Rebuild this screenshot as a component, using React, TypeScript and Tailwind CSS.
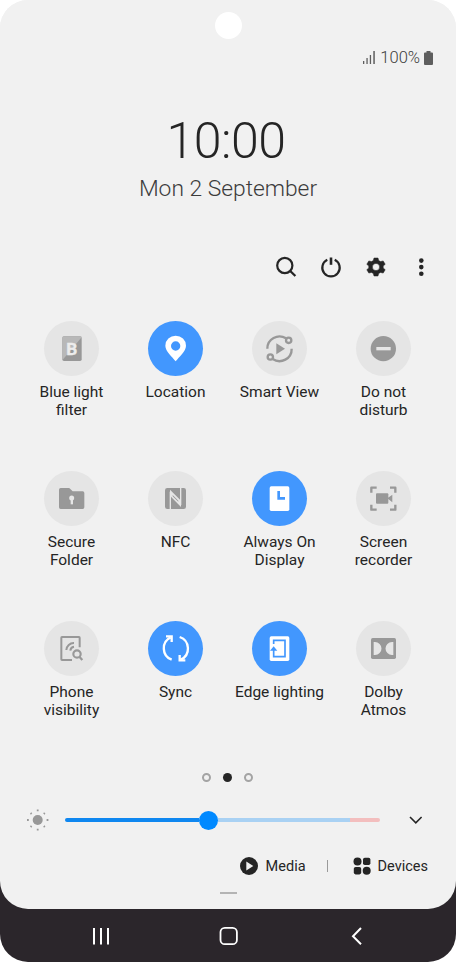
import type { ReactNode } from "react";

type Tile = { label: string[]; on?: boolean; icon: ReactNode };

// Tile icons share a 165-unit box, three units to a pixel.
const tiles: Tile[] = [
  {
    label: ["Blue light", "filter"],
    icon: (
      <>
        <rect x="55" y="46" width="58" height="74" rx="5" fill="#989898" />
        <path d="M60 46H108Q113 46 113 49L55 118V51Q55 46 60 46Z" fill="#b8b8b8" />
        <text x="83" y="101" textAnchor="middle" fontSize="52" fontWeight="700" fill="#ececec" stroke="#ececec" strokeWidth="1">
          B
        </text>
      </>
    ),
  },
  {
    label: ["Location"],
    on: true,
    icon: (
      <path
        fillRule="evenodd"
        fill="#fff"
        d="M83 121C73 107 52 91 52 74A31 30 0 0 1 114 74C114 91 93 107 83 121ZM83 61A14 14 0 1 0 83 89A14 14 0 1 0 83 61Z"
      />
    ),
  },
  {
    label: ["Smart View"],
    icon: (
      <>
        <g fill="none" stroke="#989898" strokeWidth="7">
          <path d="M46 83A36.500 36.500 0 0 1 102 52" />
          <path d="M119 83A36.500 36.500 0 0 1 62 114" />
          <circle cx="110" cy="58" r="8" />
          <circle cx="55" cy="108" r="8" />
        </g>
        <path d="M73 67V100L99 83Z" fill="#989898" />
      </>
    ),
  },
  {
    label: ["Do not", "disturb"],
    icon: (
      <>
        <circle cx="82" cy="83" r="38" fill="#989898" />
        <rect x="61" y="78" width="43" height="10" fill="#e6e6e6" />
      </>
    ),
  },
  {
    label: ["Secure", "Folder"],
    icon: (
      <>
        <path d="M50 51H74Q77 51 79 54L86 61H116Q121 61 121 66V109Q121 114 116 114H50Q45 114 45 109V56Q45 51 50 51Z" fill="#989898" />
        <circle cx="83" cy="81" r="7.500" fill="#e6e6e6" />
        <rect x="80" y="83" width="7" height="17" fill="#e6e6e6" />
      </>
    ),
  },
  {
    label: ["NFC"],
    icon: (
      <>
        <rect x="51" y="51" width="63" height="63" rx="7" fill="#989898" />
        <path d="M67 115V62M98 50V102" fill="none" stroke="#e6e6e6" strokeWidth="4" />
        <path d="M66 56L99 89V108L66 74Z" fill="#e6e6e6" />
        <path d="M74 72L91 89V92L74 76Z" fill="#989898" />
      </>
    ),
  },
  {
    label: ["Always On", "Display"],
    on: true,
    icon: (
      <>
        <rect x="53" y="46" width="59" height="74" rx="5" fill="#fff" />
        <path d="M80 60V82H99" fill="none" stroke="#4297fe" strokeWidth="8" />
      </>
    ),
  },
  {
    label: ["Screen", "recorder"],
    icon: (
      <>
        <path
          d="M46 65V50H62M102 50H118V65M118 101V116H102M62 116H46V101"
          fill="none"
          stroke="#989898"
          strokeWidth="7"
          strokeLinejoin="round"
        />
        <rect x="60" y="67" width="37" height="31" rx="3" fill="#989898" />
        <path d="M94 82L109 71V94Z" fill="#989898" />
      </>
    ),
  },
  {
    label: ["Phone", "visibility"],
    icon: (
      <g fill="none" stroke="#989898" strokeWidth="6.500">
        <path d="M107 79V50Q107 48 105 48H54Q52 48 52 50V115Q52 117 54 117H84" strokeWidth="6" />
        <path d="M67 87A22 22 0 0 1 90 66M79 89A13 13 0 0 1 90 77" strokeWidth="6" />
        <circle cx="99" cy="99" r="11" />
        <path d="M106 107L115 117" />
      </g>
    ),
  },
  {
    label: ["Sync"],
    on: true,
    icon: (
      <g fill="none" stroke="#fff" strokeWidth="7">
        <path d="M71 116A36.500 36.500 0 0 1 68 49M95 48A36.500 36.500 0 0 1 98 116" />
        <path d="M54 46H71V63M95 102V118H112" />
      </g>
    ),
  },
  {
    label: ["Edge lighting"],
    on: true,
    icon: (
      <>
        <rect x="53" y="46" width="59" height="74" rx="5" fill="#fff" />
        <path d="M65 69V58H99V107H65V84" fill="none" stroke="#4297fe" strokeWidth="5" />
        <path d="M65 76L54 89H76Z" fill="#4297fe" />
      </>
    ),
  },
  {
    label: ["Dolby", "Atmos"],
    icon: (
      <>
        <rect x="45" y="51" width="75" height="63" rx="5" fill="#989898" />
        <path d="M53 63H57A19.500 19.500 0 0 1 57 102H53ZM112 63H108A19.500 19.500 0 0 0 108 102H112Z" fill="#e6e6e6" />
      </>
    ),
  },
];

function QuickTile({ label, on, icon }: Tile) {
  return (
    <div className="flex h-[150px] flex-col items-center">
      <div className={on ? "size-[55px] rounded-full bg-[#4297fe]" : "size-[55px] rounded-full bg-[#e5e5e5]"}>
        <svg viewBox="0 0 165 165" className="size-full">
          {icon}
        </svg>
      </div>
      <div className="mt-[7px] text-center text-[15.500px] leading-[18px] whitespace-nowrap">
        {label.map((line) => (
          <div key={line}>{line}</div>
        ))}
      </div>
    </div>
  );
}

function StatusBar() {
  return (
    <div className="mt-[10px] flex h-[18px] items-center justify-end pr-[23px] text-[16.500px] text-[#5e5e5e]">
      <svg viewBox="0 0 12 13" className="mr-[5px] mb-[1px] h-[13px] w-3" fill="#5e5e5e">
        <path d="M0 10h1.300v3H0zM3.400 7h1.300v6H3.400zM6.800 4h1.300v9H6.800zM10.300 0h1.500v13h-1.500z" />
      </svg>
      <span className="pt-px font-light text-[#3c3c3c]">100%</span>
      <svg viewBox="0 0 9 14" className="mb-[1px] ml-[4px] h-[14px] w-[9px]" fill="#5e5e5e">
        <path d="M2.500 0h4v1.500H8q1 0 1 1V13q0 1-1 1H1q-1 0-1-1V2.500q0-1 1-1h1.500z" />
      </svg>
    </div>
  );
}

function Toolbar() {
  return (
    <div className="mt-[52px] flex justify-end gap-[21px] pr-[23.500px]">
      <svg viewBox="0 0 24 24" className="size-6" fill="none" stroke="#252525" strokeWidth="2.200">
        <circle cx="10.800" cy="10.500" r="7.600" />
        <path d="M16.200 16L21.400 21" strokeWidth="2.300" />
      </svg>
      <svg viewBox="0 0 24 24" className="size-6" fill="none" stroke="#252525" strokeWidth="2.200">
        <path d="M8.300 4.800A8.700 8.700 0 1 0 15.700 4.800" />
        <path d="M12 2.500V9.800" strokeWidth="2.600" />
      </svg>
      <svg viewBox="0 0 24 24" className="size-6" fill="#252525">
        <path
          fillRule="evenodd"
          d="M10 3h4l.7 2.600 1.800 1 2.700-.7 2 3.400-2 1.700v2l2 1.700-2 3.400-2.700-.7-1.800 1L14 21h-4l-.7-2.600-1.800-1-2.700.7-2-3.400 2-1.700v-2l-2-1.700 2-3.400 2.700.7 1.800-1zM12 8.400a3.600 3.600 0 1 0 0 7.200a3.600 3.600 0 1 0 0-7.200z"
          stroke="#252525"
          strokeWidth=".5"
          strokeLinejoin="round"
        />
      </svg>
      <svg viewBox="0 0 24 24" className="size-6" fill="#252525">
        <circle cx="12.300" cy="5.600" r="2.300" />
        <circle cx="12.300" cy="12.100" r="2.300" />
        <circle cx="12.300" cy="18.800" r="2.300" />
      </svg>
    </div>
  );
}

function BrightnessRow() {
  return (
    <div className="mt-[26px] flex h-[24px] items-center">
      <svg viewBox="0 0 24 24" className="ml-[26px] size-6" fill="#989898">
        <circle cx="11.700" cy="12" r="5" />
        <path
          d="M11.700 1.500v1.800M11.700 20.800v1.800M1 12h1.800M20.600 12h1.800M4.600 5l1 1M17.800 18l1 1M4.600 19l1-1M17.800 6l1-1"
          stroke="#989898"
          strokeWidth="1.800"
        />
      </svg>
      <div className="ml-[15px] flex w-[315px] items-center">
        <div className="h-[4px] w-[134px] rounded-l-full bg-[#0f87f0]" />
        <div className="size-[19px] shrink-0 rounded-full bg-[#0089ff]" />
        <div className="h-[4px] w-[132px] bg-[#a9d1f3]" />
        <div className="h-[4px] flex-1 rounded-r-full bg-[#f3bebe]" />
      </div>
      <svg viewBox="0 0 16 10" className="ml-[28px] h-[10px] w-4" fill="none" stroke="#252525" strokeWidth="1.600">
        <path d="M2 2L7.800 7.800L13.600 2" />
      </svg>
    </div>
  );
}

function PanelFooter() {
  return (
    <div className="mt-[24px] flex h-[20px] items-center justify-end pr-[28px] text-[14.500px]">
      <svg viewBox="0 0 18 18" className="size-[18px]">
        <circle cx="9" cy="9" r="9" fill="#252525" />
        <path d="M6.300 4.600V13.600L13.300 9.100Z" fill="#f1f1f1" />
      </svg>
      <span className="ml-[8px] pt-[2px]">Media</span>
      <span className="ml-[21px] h-[12px] w-px bg-[#9a9a9a]" />
      <svg viewBox="0 0 18 18" className="ml-[25px] size-[18px]" fill="#252525">
        <circle cx="4.500" cy="4.500" r="4" />
        <rect x="10" y=".7" width="7.400" height="7.400" rx="1.800" />
        <rect x=".8" y="10" width="7.400" height="7.400" rx="1.800" />
        <circle cx="13.700" cy="13.700" r="4" />
      </svg>
      <span className="ml-[7px] pt-[2px]">Devices</span>
    </div>
  );
}

export default function App() {
  return (
    <div className="h-[962px] w-[456px] overflow-hidden bg-white font-['Roboto',sans-serif] text-[#252525]">
      <div className="flex h-full flex-col overflow-hidden rounded-[28px] bg-linear-to-b from-[#f1f1f1] from-50% to-[#2b262b] to-50%">
        <div className="h-[909px] overflow-hidden rounded-b-[28px] bg-[#f1f1f1] pt-[12px]">
          <div className="mx-auto size-[27px] rounded-full bg-white" />
          <StatusBar />
          <div className="mt-[44px] text-center">
            <div className="pr-[4px] text-[50px] leading-[60px] font-light tracking-[-0.500px]">10:00</div>
            <div className="mt-[4px] text-[22.800px] leading-[28px] font-light text-[#3c3c3c]">Mon 2 September</div>
          </div>
          <Toolbar />
          <div className="mt-[42px] grid grid-cols-4 pr-[20.500px] pl-[19.500px]">
            {tiles.map((tile) => (
              <QuickTile key={tile.label[0]} {...tile} />
            ))}
          </div>
          <div className="mt-[2px] flex items-center justify-center gap-[12px] pr-[0.500px]">
            <span className="size-[9px] rounded-full border-2 border-[#a4a4a4]" />
            <span className="size-[9px] rounded-full bg-[#252525]" />
            <span className="size-[9px] rounded-full border-2 border-[#a4a4a4]" />
          </div>
          <BrightnessRow />
          <PanelFooter />
          <div className="mx-auto mt-[16px] h-[2px] w-[17px] bg-[#b4b4b4]" />
        </div>
        <div className="flex flex-1 items-center">
          <svg viewBox="0 0 18 18" className="ml-[92px] size-[18px]" stroke="#fff" strokeWidth="2">
            <path d="M2 1V17.500M9 1V17.500M16 1V17.500" />
          </svg>
          <svg viewBox="0 0 20 20" className="ml-[109px] size-5" fill="none" stroke="#fff" strokeWidth="1.800">
            <rect x="1.500" y="1.800" width="16.400" height="16.400" rx="4.300" />
          </svg>
          <svg viewBox="0 0 18 18" className="ml-[109px] size-[18px]" fill="none" stroke="#fff" strokeWidth="2">
            <path d="M13 1L5 9.200L13 17.300" />
          </svg>
        </div>
      </div>
    </div>
  );
}
